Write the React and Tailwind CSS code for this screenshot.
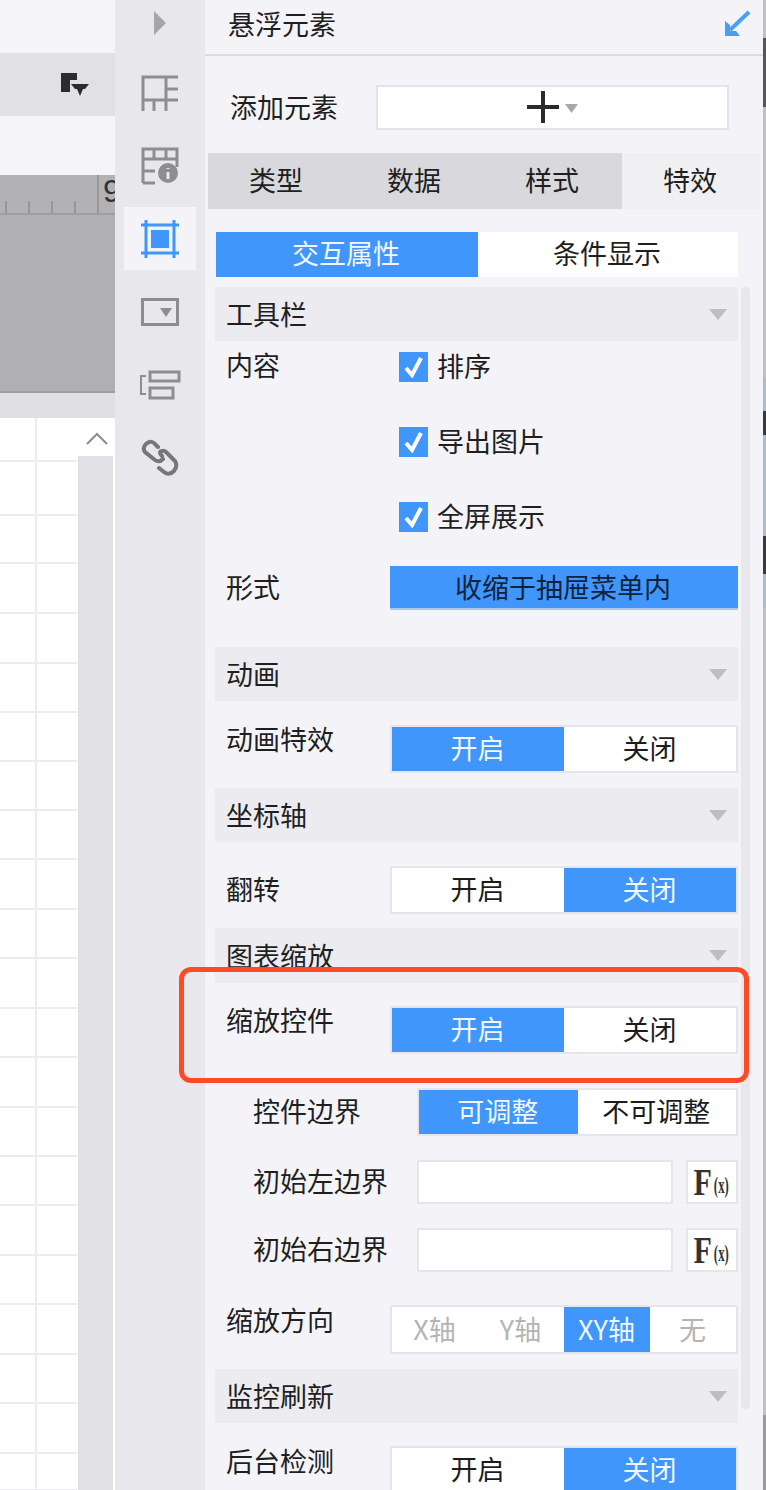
import React from "react";

const gridRows = [43, 54, 48, 50, 50, 49, 49, 49, 49, 50, 49, 50, 49, 50, 49, 49, 50, 49, 50, 49, 50, 37];

// what shows of the window behind, at the right edge
const edgeStrip = [
  [38, "#c0c0c4"],
  [69, "#55555a"],
  [271, "#c0c0c4"],
  [33, "#a9bcc8"],
  [24, "#3a3a3e"],
  [101, "#a9bcc8"],
  [38, "#3a3a3e"],
  [34, "#a9bcc8"],
  [807, "#c0c0c4"],
  [75, "#9a9a9e"],
];

const Triangle = ({ className = "" }) => (
  <svg className={className} width="18" height="11" viewBox="0 0 18 11">
    <path d="M0 0H18L9 11Z" fill="#bdbdc2" />
  </svg>
);

// left rail icons
const RailIcon = ({ type }) => {
  if (type === "table") {
    return (
      <svg width="38" height="38" viewBox="0 0 38 38" fill="none" stroke="#8e8e90" strokeWidth="3">
        <path d="M2 37V3H37M2 26H37M2 26V37M13 26V37M25 3V37M25 15H37" />
      </svg>
    );
  }
  if (type === "info") {
    return (
      <svg width="38" height="38" viewBox="0 0 38 38" fill="none" stroke="#8e8e90" strokeWidth="3">
        <path d="M2 36V2H36V20M2 12H36M13 2V12M25 2V12M2 24H14M2 36H14" />
        <circle cx="27" cy="26" r="10" fill="#8e8e90" stroke="none" />
        <path d="M27 21V22M27 25V32" stroke="#e8e8ec" strokeWidth="3" />
      </svg>
    );
  }
  if (type === "frame") {
    return (
      <svg width="38" height="38" viewBox="0 0 38 38" fill="none" stroke="#4096fa" strokeWidth="3">
        <path d="M0 5H38M0 33H38M5 0V38M33 0V38" />
        <rect x="10" y="10" width="18" height="18" fill="#4096fa" stroke="none" />
      </svg>
    );
  }
  if (type === "dropdown") {
    return (
      <svg width="38" height="28" viewBox="0 0 38 28" fill="none">
        <rect x="1.5" y="1.5" width="35" height="25" stroke="#8e8e90" strokeWidth="3" />
        <path d="M19 10H31L25 19Z" fill="#8e8e90" />
      </svg>
    );
  }
  if (type === "list") {
    return (
      <svg width="42" height="30" viewBox="0 0 42 30" fill="none" stroke="#8e8e90" strokeWidth="3">
        <rect x="11" y="2" width="29" height="9" />
        <rect x="11" y="18" width="23" height="10" />
        <path d="M7 6H2V24H7" strokeWidth="2" />
      </svg>
    );
  }
  return (
    <svg width="38" height="38" viewBox="0 0 38 38" fill="none" stroke="#77777a" strokeWidth="4" strokeLinecap="round">
      <path d="M17 8 L13 4 Q9 1 5 5 Q1 9 4 13 L14 21 Q18 24 22 20" />
      <path d="M21 17 Q17 13 21 12 Q23 11 25 13 L34 22 Q37 27 33 32 Q28 37 23 33 L18 29" />
    </svg>
  );
};

const SectionHeader = ({ title, className = "", height = "h-[54px]" }) => (
  <div className={`flex items-center justify-between bg-[#ececf0] pl-[11px] pr-[11px] ${height} ${className}`}>
    <span>{title}</span>
    <Triangle />
  </div>
);

const Toggle = ({ items, active, className = "", muted = false }) => (
  <div className={`flex border-2 border-[#e6e6ea] bg-white ${className}`}>
    {items.map((item, i) => (
      <div
        key={item}
        className={`flex flex-1 items-center justify-center pb-[2px] pr-[1px] ${
          i === active ? "bg-[#4096fa] text-[#f0f6ff]" : muted ? "text-[#b4b4b4]" : "text-[#1c1c1c]"
        }`}
      >
        {item}
      </div>
    ))}
  </div>
);

const Row = ({ label, lh = "leading-[28px]", className = "", indent = false, children }) => (
  <div className={`flex items-start ${className}`}>
    <div className={`shrink-0 ${lh} ${indent ? "w-[202px] pl-[38px]" : "w-[175px] pl-[11px]"}`}>{label}</div>
    {children}
  </div>
);

const CheckItem = ({ label }) => (
  <div className="flex h-[30px] items-center">
    <div className="flex h-[30px] w-[29px] items-center justify-center bg-[#4096fa]">
      <svg width="20" height="22" viewBox="0 0 20 22" fill="none" stroke="#fff" strokeWidth="4">
        <path d="M2 12L8 19L17 2" />
      </svg>
    </div>
    <span className="ml-[9px] pb-[3px]">{label}</span>
  </div>
);

const FormulaInput = ({ label, className = "" }) => (
  <Row label={label} indent lh="leading-[42px]" className={className}>
    <div className="h-[44px] w-[257px] border-2 border-[#e6e6ea] bg-white" />
    <div className="ml-[13px] flex h-[44px] w-[52px] items-center justify-center border-2 border-[#e6e6ea] bg-white font-['Liberation_Serif',serif] text-[#333]">
      <span className="inline-block scale-y-[1.25] text-[30px] font-bold leading-none">F</span>
      <span className="mt-[5px] inline-block scale-x-[0.8] scale-y-[1.5] text-[16px] font-bold leading-none">(x)</span>
    </div>
  </Row>
);

const LeftArea = () => (
  <div className="flex w-[115px] shrink-0 flex-col">
    <div className="h-[53px] bg-[#f5f5f8]" />
    <div className="relative flex h-[63px] items-center justify-end bg-[#e1e1e5] pr-[25px]">
      <svg width="29" height="24" viewBox="0 0 29 24">
        <path d="M0 0H16V7H9V19H0Z" fill="#2c2c30" />
        <path d="M10 11H28L24 16H22L19 23L16 16H14Z" fill="#2c2c30" />
      </svg>
    </div>
    <div className="h-[59px] bg-[#f5f5f8]" />
    <div className="relative h-[40px] overflow-hidden border-b-2 border-[#9f9fa1] bg-[#b2b2b4]">
      <svg className="absolute left-0 top-0" width="115" height="38" viewBox="0 0 115 38" fill="none" stroke="#98989a" strokeWidth="2">
        <path d="M6 26V38M29 26V38M52 26V38M75 26V38M98 0V38" />
      </svg>
      <span className="absolute left-[103px] top-[-2px] font-['Liberation_Sans',sans-serif] text-[32px] text-[#333]">9</span>
    </div>
    <div className="h-[178px] border-b-2 border-[#9f9fa1] bg-[#b0b0b2]" />
    <div className="h-[25px] bg-[#e0e0e4]" />
    <div className="flex min-h-0 flex-1 bg-white">
      <div className="w-[77px]">
        {gridRows.map((h, i) => (
          <div key={i} style={{ height: h + (i === 0 ? 1 : 0) }} className="flex border-b-2 border-[#ececee]">
            <div className="w-[37px] border-r-2 border-[#ececee]" />
          </div>
        ))}
      </div>
      <div className="ml-px flex flex-1 flex-col">
        <div className="mt-[2px] flex h-[36px] items-center justify-center bg-white">
          <svg width="22" height="13" viewBox="0 0 22 13" fill="none" stroke="#8c8c8c" strokeWidth="2">
            <path d="M1 12L11 2L21 12" />
          </svg>
        </div>
        <div className="mr-[2px] flex-1 bg-[#e1e1e5]" />
      </div>
    </div>
  </div>
);

const IconRail = () => (
  <div className="flex w-[90px] shrink-0 flex-col items-center bg-[#e8e8ec]">
    <div className="flex h-[56px] w-full items-start justify-center pt-[11px]">
      <svg width="12" height="24" viewBox="0 0 12 24">
        <path d="M0 0L12 12L0 24Z" fill="#a6a6aa" />
      </svg>
    </div>
    {["table", "info", "frame", "dropdown", "list", "link"].map((type) => (
      <div key={type} className="flex h-[73px] w-full items-center justify-center">
        <div className={`flex h-[63px] w-[72px] items-center justify-center ${type === "frame" ? "bg-[#f4f4f8]" : ""}`}>
          <RailIcon type={type} />
        </div>
      </div>
    ))}
  </div>
);

const SidePanel = () => (
  <div className="min-w-0 flex-1 bg-[#f4f4f8]">
    <div className="flex h-[56px] items-center justify-between border-b-2 border-[#dcdce0] pl-[23px] pr-[12px]">
      <span className="pb-[7px]">悬浮元素</span>
      <svg className="mb-[6px]" width="28" height="28" viewBox="0 0 28 28" fill="none">
        <path d="M26 2L7 20" stroke="#4a9ff5" strokeWidth="4" />
        <path d="M2 11V26H17L13 21H7V15Z" fill="#4a9ff5" />
      </svg>
    </div>
    <div className="flex h-[97px] items-center pl-[25px]">
      <span className="w-[146px] shrink-0 pt-[4px]">添加元素</span>
      <div className="mt-[5px] flex h-[45px] w-[353px] items-center justify-center border-2 border-[#e4e4e8] bg-white">
        <svg width="32" height="32" viewBox="0 0 32 32" stroke="#2b2b2b" strokeWidth="4">
          <path d="M0 16H32M16 0V32" />
        </svg>
        <svg className="ml-[6px] mt-[2px]" width="13" height="9" viewBox="0 0 13 9">
          <path d="M0 0H13L6.5 9Z" fill="#a8a8ac" />
        </svg>
      </div>
    </div>
    <div className="ml-[3px] flex h-[56px] w-[552px]">
      {["类型", "数据", "样式", "特效"].map((tab) => (
        <div
          key={tab}
          className={`flex flex-1 items-center justify-center pb-[3px] pr-[2px] ${tab === "特效" ? "bg-[#f0f0f3]" : "bg-[#d9d9dd]"}`}
        >
          {tab}
        </div>
      ))}
    </div>
    <div className="mt-[23px] ml-[11px] flex h-[45px] w-[522px]">
      <div className="flex w-[262px] items-center justify-center bg-[#4096fa] pb-[3px] pr-[2px] text-[#f0f6ff]">交互属性</div>
      <div className="flex flex-1 items-center justify-center bg-white pb-[3px] pr-[2px]">条件显示</div>
    </div>
    <div className="mt-[10px] flex pl-[10px]">
      <div className="w-[523px] shrink-0">
        <SectionHeader title="工具栏" />
        <Row label="内容" lh="leading-[26px]" className="mt-[11px]">
          <div className="ml-[9px] flex flex-col gap-[45px]">
            <CheckItem label="排序" />
            <CheckItem label="导出图片" />
            <CheckItem label="全屏展示" />
          </div>
        </Row>
        <Row label="形式" lh="leading-[42px]" className="mt-[34px]">
          <div className="flex h-[44px] w-[348px] items-center justify-center border-b-2 border-[#a8c8ee] bg-[#4096fa] pr-[2px] text-[#10233c]">
            收缩于抽屉菜单内
          </div>
        </Row>
        <SectionHeader title="动画" className="mt-[37px]" />
        <Row label="动画特效" className="mt-[24px]">
          <Toggle items={["开启", "关闭"]} active={0} className="h-[48px] w-[348px]" />
        </Row>
        <SectionHeader title="坐标轴" className="mt-[15px]" />
        <Row label="翻转" lh="leading-[46px]" className="mt-[24px]">
          <Toggle items={["开启", "关闭"]} active={1} className="h-[48px] w-[348px]" />
        </Row>
        <SectionHeader title="图表缩放" height="h-[55px]" className="mt-[14px]" />
        <Row label="缩放控件" className="mt-[23px]">
          <Toggle items={["开启", "关闭"]} active={0} className="h-[48px] w-[348px]" />
        </Row>
        <Row label="控件边界" indent lh="leading-[46px]" className="mt-[34px]">
          <Toggle items={["可调整", "不可调整"]} active={0} className="h-[48px] w-[321px]" />
        </Row>
        <FormulaInput label="初始左边界" className="mt-[24px]" />
        <FormulaInput label="初始右边界" className="mt-[24px]" />
        <Row label="缩放方向" lh="leading-[30px]" className="mt-[33px]">
          <Toggle items={["X轴", "Y轴", "XY轴", "无"]} active={2} muted className="h-[49px] w-[348px]" />
        </Row>
        <SectionHeader title="监控刷新" className="mt-[15px]" />
        <Row label="后台检测" lh="leading-[30px]" className="mt-[23px]">
          <Toggle items={["开启", "关闭"]} active={1} className="h-[48px] w-[348px]" />
        </Row>
      </div>
      <div className="ml-[3px] h-[1122px] w-[9px] shrink-0 rounded-full bg-[#e8e8ec]" />
    </div>
  </div>
);

export default function App() {
  return (
    <div className="relative flex h-[1490px] w-[766px] overflow-hidden bg-white font-['Noto_Sans_CJK_SC',sans-serif] text-[27px] leading-[36px] text-[#1f1f1f]">
      <LeftArea />
      <IconRail />
      <SidePanel />
      <div className="flex w-[3px] shrink-0 flex-col">
        {edgeStrip.map(([h, color], i) => (
          <div key={i} style={{ height: h, backgroundColor: color }} />
        ))}
      </div>
      {/* annotation box drawn over the screenshot */}
      <div className="absolute left-[179px] top-[967px] h-[116px] w-[570px] rounded-[12px] border-[5px] border-[#ff4a25]" />
    </div>
  );
}
